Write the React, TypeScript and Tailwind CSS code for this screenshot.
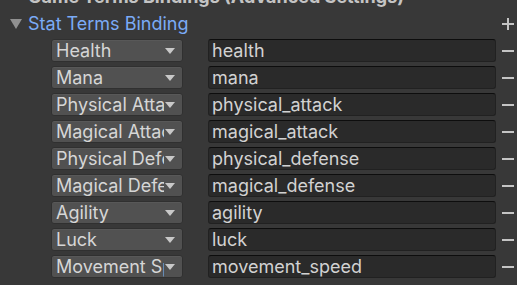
import React from 'react';

const STATS = [
    { label: 'Health', key: 'health' },
    { label: 'Mana', key: 'mana' },
    { label: 'Physical Attack', key: 'physical_attack' },
    { label: 'Magical Attack', key: 'magical_attack' },
    { label: 'Physical Defense', key: 'physical_defense' },
    { label: 'Magical Defense', key: 'magical_defense' },
    { label: 'Agility', key: 'agility' },
    { label: 'Luck', key: 'luck' },
    { label: 'Movement Speed', key: 'movement_speed' },
];

const font = { fontFamily: 'Inter, "Noto Sans", sans-serif' };

const StatRow: React.FC<{ label: string; value: string }> = ({ label, value }) => (
    <div className="flex items-center h-[23px] mb-[4px]">
        {/* Popup */}
        <div className="ml-[51px] w-[132px] h-[23px] flex items-center rounded-[3px] bg-[#515151] border border-[#303030] shadow-[inset_0_1px_0_#585858]">
            <div className="flex-1 overflow-hidden whitespace-nowrap pl-[4px] text-[18px] leading-[21px] text-[#d6d6d6]">
                {label}
            </div>
            <svg width="10" height="6" viewBox="0 0 10 6" className="mr-[7px] ml-[1px] shrink-0">
                <path d="M0 0 L10 0 L5 6 Z" fill="#c8c8c8" />
            </svg>
        </div>
        {/* Text field */}
        <div className="ml-[25px] w-[288px] h-[23px] flex items-center rounded-[3px] bg-[#2a2a2a] border border-[#212121] border-t-[#0d0d0d]">
            <span className="pl-[3px] text-[18px] leading-[21px] text-[#d2d2d2] whitespace-nowrap">{value}</span>
        </div>
        {/* Remove */}
        <div className="ml-[6px] w-[12px] h-[2px] bg-[#c4c4c4]" />
    </div>
);

export default function App() {
    return (
        <div className="w-[517px] h-[285px] bg-[#383838] overflow-hidden" style={font}>
            {/* Clipped section header */}
            <div className="-mt-[17px] h-[27px] pl-[28px] text-[18px] leading-[27px] font-bold text-[#c4c4c4] whitespace-nowrap">
                Game Terms Bindings (Advanced Settings)
            </div>

            {/* Foldout */}
            <div className="h-[27px] flex items-center">
                <svg width="12" height="10" viewBox="0 0 12 10" className="ml-[10px] shrink-0">
                    <path d="M0 0 L12 0 L6 10 Z" fill="#909090" />
                </svg>
                <span className="ml-[6px] text-[18px] leading-[27px] text-[#7babf6] whitespace-nowrap">Stat Terms Binding</span>
                <div className="ml-auto mr-[3px] relative w-[12px] h-[12px]">
                    <div className="absolute left-0 top-[5px] w-[12px] h-[2px] bg-[#c4c4c4]" />
                    <div className="absolute top-0 left-[5px] w-[2px] h-[12px] bg-[#c4c4c4]" />
                </div>
            </div>

            <div className="pt-[2px]">
                {STATS.map((s) => (
                    <StatRow key={s.key} label={s.label} value={s.key} />
                ))}
            </div>
        </div>
    );
}
